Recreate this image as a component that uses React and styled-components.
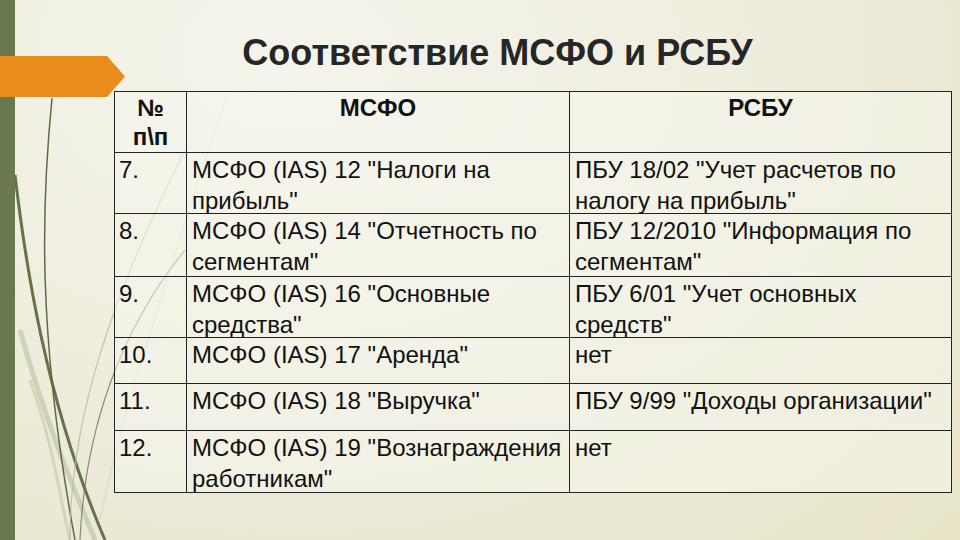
import styled, { createGlobalStyle } from 'styled-components';

const GlobalStyle = createGlobalStyle`
  html, body {
    margin: 0;
    padding: 0;
  }
  body {
    font-family: "Liberation Sans", Arial, sans-serif;
    color: #111;
  }
`;

const Slide = styled.div`
  position: relative;
  width: 960px;
  height: 540px;
  overflow: hidden;
  display: flex;
  background: radial-gradient(ellipse at 30% 10%, #f5f4ec 0%, #efeedf 45%, #e7e4c8 100%);
`;

const SideBar = styled.div`
  width: 15px;
  flex-shrink: 0;
  background: #6a7850;
`;

const Decor = styled.svg`
  position: absolute;
  left: 0;
  top: 0;
  pointer-events: none;
`;

const Arrow = styled.div`
  position: absolute;
  left: 0;
  top: 56px;
  width: 125px;
  height: 41px;
  background: #e98c1c;
  clip-path: polygon(0 0, 107px 0, 125px 50%, 107px 100%, 0 100%);
`;

const Main = styled.main`
  position: relative;
  flex: 1;
  display: flex;
  flex-direction: column;
  padding: 0 9px 0 99px;
`;

const Title = styled.h1`
  margin: 0;
  height: 91px;
  display: flex;
  align-items: center;
  justify-content: center;
  padding-right: 71px;
  padding-top: 14px;
  box-sizing: border-box;
  font-size: 36px;
  font-weight: 700;
  color: #262626;
`;

const Table = styled.div`
  display: grid;
  grid-template-columns: 72px 383px 382px;
  width: 837px;
  border-top: 1px solid #222;
  border-left: 1px solid #222;
  background: rgba(246, 245, 236, 0.55);
`;

const Cell = styled.div`
  box-sizing: border-box;
  height: ${(p) => p.$h}px;
  border-right: 1px solid #222;
  border-bottom: 1px solid #222;
  padding: 1px 3px 0 5px;
  font-size: 24px;
  line-height: 31px;
  color: #111;
`;

const NumCell = styled(Cell)`
  padding-left: 4px;
`;

const HeadCell = styled(Cell)`
  font-weight: 700;
  line-height: 29px;
  text-align: center;
  padding: 1px 2px 0;
`;

const rows = [
  { n: '7.', h: 61, a: 'МСФО (IAS) 12 "Налоги на прибыль"', b: 'ПБУ 18/02 "Учет расчетов по налогу на прибыль"' },
  { n: '8.', h: 63, a: 'МСФО (IAS) 14 "Отчетность по сегментам"', b: 'ПБУ 12/2010 "Информация по сегментам"' },
  { n: '9.', h: 61, a: 'МСФО (IAS) 16 "Основные средства"', b: 'ПБУ 6/01 "Учет основных средств"' },
  { n: '10.', h: 46, a: 'МСФО (IAS) 17 "Аренда"', b: 'нет' },
  { n: '11.', h: 47, a: 'МСФО (IAS) 18 "Выручка"', b: 'ПБУ 9/99 "Доходы организации"' },
  { n: '12.', h: 62, a: 'МСФО (IAS) 19 "Вознаграждения работникам"', b: 'нет' },
];

function Vines() {
  return (
    <Decor width="260" height="540" viewBox="0 0 260 540">
      <path d="M20 330 C 45 420, 70 480, 95 540" stroke="#a9b38a" strokeWidth="5" fill="none" opacity="0.45" />
      <path d="M30 380 C 55 450, 60 500, 70 540" stroke="#b9c19c" strokeWidth="3" fill="none" opacity="0.5" />
      <path d="M15 175 C 25 260, 45 400, 105 540" stroke="#667249" strokeWidth="3" fill="none" />
      <path d="M52 98 C 42 200, 36 330, 75 540" stroke="#5f6a44" strokeWidth="1.5" fill="none" />
      <path d="M80 540 C 85 430, 120 330, 185 250" stroke="#6e745e" strokeWidth="1.2" fill="none" opacity="0.8" />
      <path d="M70 540 C 70 420, 110 300, 185 150" stroke="#b8b8a6" strokeWidth="1.2" fill="none" opacity="0.8" />
      <path d="M100 520 C 120 420, 160 300, 225 100" stroke="#c9c8b9" strokeWidth="1" fill="none" opacity="0.6" />
    </Decor>
  );
}

export default function App() {
  return (
    <>
      <GlobalStyle />
      <Slide>
        <SideBar />
        <Vines />
        <Arrow />
        <Main>
          <Title>Соответствие МСФО и РСБУ</Title>
          <Table>
            <HeadCell $h={61}>№<br />п\п</HeadCell>
            <HeadCell $h={61}>МСФО</HeadCell>
            <HeadCell $h={61}>РСБУ</HeadCell>
            {rows.map((r) => (
              <>
                <NumCell key={r.n + 'n'} $h={r.h}>{r.n}</NumCell>
                <Cell key={r.n + 'a'} $h={r.h}>{r.a}</Cell>
                <Cell key={r.n + 'b'} $h={r.h}>{r.b}</Cell>
              </>
            ))}
          </Table>
        </Main>
      </Slide>
    </>
  );
}
